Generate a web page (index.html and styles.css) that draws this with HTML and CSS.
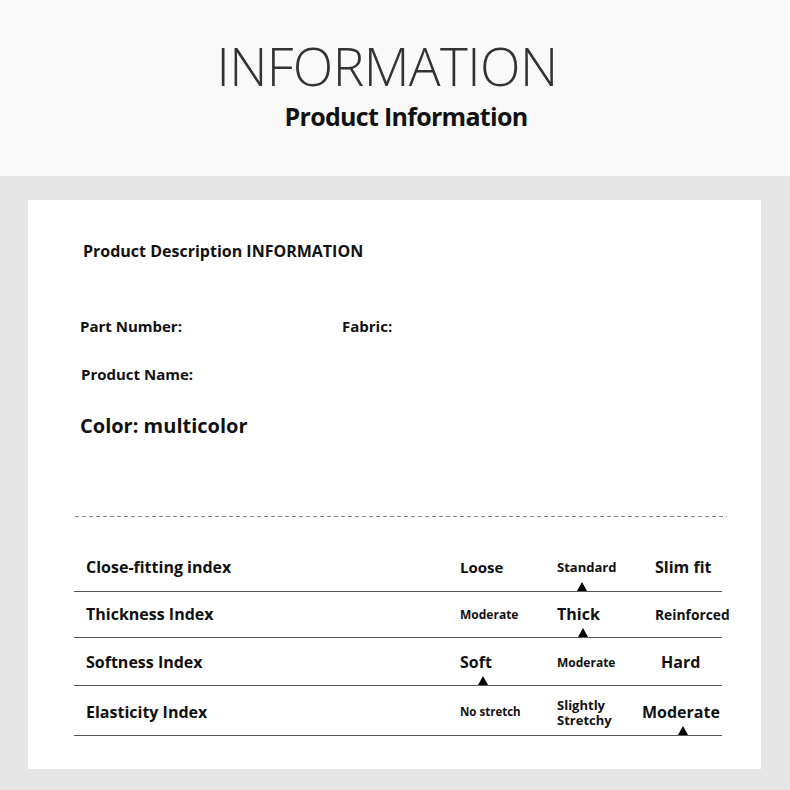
FILE: index.html
```html
<!DOCTYPE html>
<html>
<head>
<meta charset="utf-8">
<link rel="stylesheet" href="styles.css">
</head>
<body>
<header class="top">
  <h1 class="title">INFORMATION</h1>
  <h2 class="subtitle">Product Information</h2>
</header>
<main class="frame">
  <section class="card">
    <h3 class="desc">Product Description INFORMATION</h3>
    <div class="fields">
      <div class="field-row">
        <span class="field part">Part Number:</span>
        <span class="field">Fabric:</span>
      </div>
      <div class="field name">Product Name:</div>
      <div class="field color">Color: multicolor</div>
    </div>
    <div class="dash"></div>
    <div class="table">
      <div class="row r1">
        <span class="label">Close-fitting index</span>
        <span class="cell s15">Loose</span>
        <span class="cell s13">Standard</span>
        <span class="cell s16">Slim fit</span>
        <i class="tri t-r1"></i>
      </div>
      <div class="row r2">
        <span class="label">Thickness Index</span>
        <span class="cell s12">Moderate</span>
        <span class="cell s16">Thick</span>
        <span class="cell s14">Reinforced</span>
        <i class="tri t-r2"></i>
      </div>
      <div class="row r3">
        <span class="label">Softness Index</span>
        <span class="cell s16">Soft</span>
        <span class="cell s12">Moderate</span>
        <span class="cell s16 hard">Hard</span>
        <i class="tri t-r3"></i>
      </div>
      <div class="row r4">
        <span class="label">Elasticity Index</span>
        <span class="cell s115">No stretch</span>
        <span class="cell s13 two"><span class="ln">Slightly</span><span class="ln">Stretchy</span></span>
        <span class="cell s16 mod">Moderate</span>
        <i class="tri t-r4"></i>
      </div>
    </div>
  </section>
</main>
</body>
</html>
```
FILE: styles.css
```css
* { box-sizing: border-box; }
html, body { margin: 0; padding: 0; }
body {
  width: 790px;
  height: 790px;
  overflow: hidden;
  font-family: "Open Sans", "Noto Sans", sans-serif;
  color: #111;
  background: #e6e6e6;
}
.top {
  height: 176px;
  background: #f9f9f9;
  display: flex;
  flex-direction: column;
  align-items: center;
}
.title {
  margin: 34px 0 0 0;
  font-weight: 300;
  font-size: 53px;
  line-height: 64px;
  color: #333;
  letter-spacing: -0.6px;
  padding-right: 16px;
}
.subtitle {
  margin: 2px 0 0 0;
  font-weight: 700;
  font-size: 25px;
  line-height: 32px;
  color: #111;
  letter-spacing: -0.7px;
  padding-left: 22px;
}
.frame {
  padding: 24px 29px 21px 28px;
}
.card {
  background: #fff;
  height: 569px;
  padding: 40px 0 0 0;
}
.desc {
  margin: 0 0 0 55px;
  font-size: 16px;
  font-weight: 700;
  line-height: 22px;
}
.fields {
  padding-left: 52px;
  margin-top: 54px;
}
.field-row {
  display: flex;
}
.field {
  font-size: 15px;
  font-weight: 700;
  line-height: 20px;
}
.part { width: 262px; }
.name { margin-top: 28px; margin-left: 1px; }
.color { margin-top: 29px; font-size: 20px; line-height: 26px; }
.dash {
  margin: 77px 0 0 47px;
  width: 652px;
  height: 1px;
  background: repeating-linear-gradient(to right, #888 0 4px, transparent 4px 7px);
}
.table {
  margin: 29px 0 0 46px;
  width: 648px;
}
.row {
  display: grid;
  grid-template-columns: 386px 97px 98px 1fr;
  align-items: center;
  border-bottom: 1px solid #555;
  position: relative;
}
.r1 { height: 46px; padding-bottom: 4px; }
.r2 { height: 46px; padding-bottom: 1px; }
.r3 { height: 48px; padding-top: 1px; }
.r4 { height: 50px; padding-top: 2px; }
.label {
  padding-left: 12px;
  font-size: 16px;
  font-weight: 700;
}
.cell { font-weight: 700; white-space: nowrap; }
.s115 { font-size: 11.5px; }
.s12 { font-size: 12px; }
.s13 { font-size: 13px; }
.s14 { font-size: 13.8px; }
.s15 { font-size: 15px; }
.s16 { font-size: 16px; }
.hard { padding-left: 6px; }
.mod { justify-self: start; margin-left: -13px; }
.two {
  display: flex;
  flex-direction: column;
  margin-top: 3px;
}
.ln { display: block; line-height: 15px; height: 15px; }
.tri {
  position: absolute;
  bottom: 0;
  width: 0;
  height: 0;
  border-left: 5px solid transparent;
  border-right: 5px solid transparent;
  border-bottom: 9px solid #000;
}
.t-r1 { left: 503px; }
.t-r2 { left: 504px; }
.t-r3 { left: 404px; }
.t-r4 { left: 604px; }
```
